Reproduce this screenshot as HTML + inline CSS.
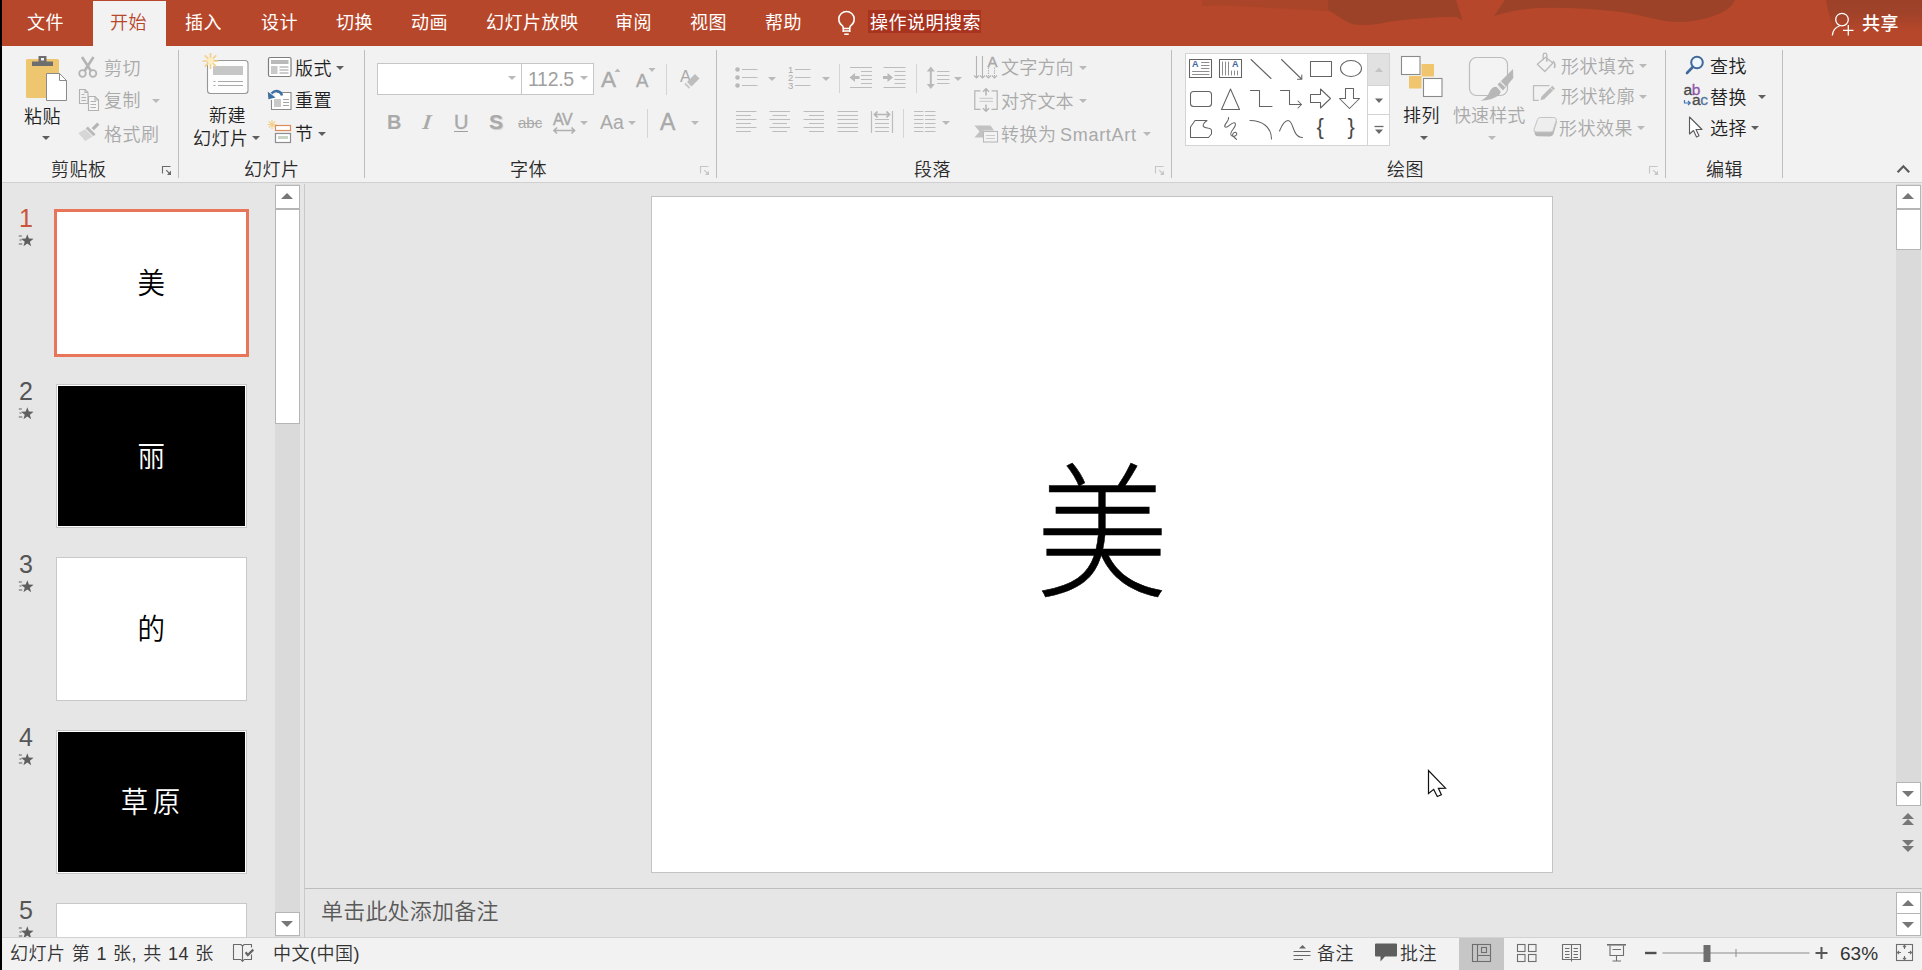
<!DOCTYPE html>
<html lang="zh-CN">
<head>
<meta charset="utf-8">
<title>PowerPoint</title>
<style>
*{box-sizing:border-box;margin:0;padding:0}
html,body{width:1922px;height:970px;overflow:hidden;background:#e6e6e6}
body{font:350 18px/24px "Liberation Sans","Noto Sans CJK SC",sans-serif;color:#1f1f1f;position:relative;letter-spacing:.5px}
.a{position:absolute;white-space:nowrap}
.t{position:absolute;white-space:nowrap;height:24px;line-height:24px}
.d{color:#a9a9a9}
.w{color:#fff;font-weight:400}
.ts{-webkit-text-stroke:.4px #a9a9a9}
svg{position:absolute;overflow:visible}
.sep{position:absolute;width:1px;background:#bebebe}
.ar{position:absolute;width:0;height:0;border-left:4px solid transparent;border-right:4px solid transparent;border-top:4px solid #5e5e5e}
.ar.d{border-top-color:#b9b9b9}
.gl{position:absolute;white-space:nowrap;height:24px;line-height:24px;color:#2a2a2a;top:158px}
#tabbar{position:absolute;left:0;top:0;width:1922px;height:46px;background:#b7472a}
#ribbon{position:absolute;left:0;top:46px;width:1922px;height:137px;background:#f2f2f2;border-bottom:1px solid #d0d0d0}
#leftedge{position:absolute;left:0;top:0;width:2px;height:970px;background:#000;z-index:50}
#status{position:absolute;left:0;top:937px;width:1922px;height:33px;background:#f2f2f2;border-top:1px solid #d2d2d2}
.sb{position:absolute;background:#fff;border:1px solid #b5b5b5}
.trk{position:absolute;background:#dadada}
.tri-u{position:absolute;width:0;height:0;border-left:6px solid transparent;border-right:6px solid transparent;border-bottom:6px solid #777}
.tri-d{position:absolute;width:0;height:0;border-left:6px solid transparent;border-right:6px solid transparent;border-top:6px solid #777}
.th{position:absolute;width:191px;height:144px;border:1px solid #c8c8c8;background:#fff}
.th.k{background:#000;box-shadow:inset 0 0 0 1px #fff}
.tht{position:absolute;left:0;width:100%;text-align:center;font-size:27.5px;line-height:36px;height:36px;transform:scaleY(1.06)}
.num{position:absolute;font-size:25px;line-height:28px;height:28px;color:#555;left:19px;width:14px;text-align:center;letter-spacing:0}
</style>
</head>
<body>
<div id="leftedge"></div>
<!-- ================= TAB BAR ================= -->
<div id="tabbar">
<svg style="left:1180px;top:0" width="742" height="46" viewBox="1180 0 742 46">
<path d="M1202 0L1202 6C1230 4 1260 8 1290 9C1310 10 1325 11 1338 12L1338 0Z" fill="#ab452a"/>
<path d="M1328 0L1328 10C1336 14 1344 22 1354 24.500C1362 25 1370 25 1378 24C1392 21 1405 19.500 1417 18.800C1432 17.500 1445 17 1456 16.800L1462.700 20.800L1456 0Z" fill="#9b4229"/>
<path d="M1505 0L1494 16C1508 12 1522 9 1537 8C1565 7 1592 9 1618 11.500C1635 14 1650 18 1664 20.700C1672 22 1680 22.200 1687 21.800C1702 20 1715 16 1724 11.500C1730 8 1733 4 1735 0Z" fill="#9b4229"/>
<defs><linearGradient id="pg" x1="0" y1="0" x2="0" y2="1"><stop offset="0" stop-color="#9d4229"/><stop offset=".4" stop-color="#9f4229"/><stop offset="1" stop-color="#b7472a"/></linearGradient></defs><path d="M1826 0C1827 8 1830 18 1834 32L1922 32L1922 0Z" fill="url(#pg)"/>
</svg>
<div class="a" style="left:93px;top:1px;width:73px;height:45px;background:#f2f2f2"></div>
<div class="t w" style="left:27px;top:11px">文件</div>
<div class="t" style="left:110px;top:11px;color:#b7472a">开始</div>
<div class="t w" style="left:185px;top:11px">插入</div>
<div class="t w" style="left:261px;top:11px">设计</div>
<div class="t w" style="left:336px;top:11px">切换</div>
<div class="t w" style="left:411px;top:11px">动画</div>
<div class="t w" style="left:486px;top:11px">幻灯片放映</div>
<div class="t w" style="left:615px;top:11px">审阅</div>
<div class="t w" style="left:690px;top:11px">视图</div>
<div class="t w" style="left:765px;top:11px">帮助</div>
<svg style="left:0;top:0" width="900" height="46" viewBox="0 0 900 46" fill="none" stroke="#fff"><path d="M843.100 27.400C843.100 25.600 841.600 25.100 840.400 23.900A7.700 7.700 0 1 1 852.600 23.900C851.400 25.100 849.900 25.600 849.900 27.400" stroke-width="1.600"/><path d="M842.600 28.500h7.800M842.600 31h7.800" stroke-width="1.700"/><path d="M843.300 27v5M849.700 27v5" stroke-width="1.400"/><path d="M844.300 34.200h4.400" stroke-width="1.600"/></svg>
<div class="a" style="left:868px;top:10px;width:113px;height:23px;background:#a8331f"></div>
<div class="t w" style="left:870px;top:11px">操作说明搜索</div>
<svg style="left:1780px;top:0" width="142" height="46" viewBox="1780 0 142 46" fill="none" stroke="#fff" stroke-width="1.300"><circle cx="1842" cy="19.600" r="6.300"/><path d="M1832.300 35.500C1832.800 30.500 1835.500 27.200 1839.500 26"/><path d="M1848.300 25v10.500M1843 30.300h10.500"/></svg>
<div class="t w" style="left:1862px;top:12px;font-weight:500">共享</div>
</div>
<!-- ================= RIBBON ================= -->
<div id="ribbon"></div>
<!-- group separators -->
<div class="sep" style="left:178px;top:50px;height:128px"></div>
<div class="sep" style="left:364px;top:50px;height:128px"></div>
<div class="sep" style="left:716px;top:50px;height:128px"></div>
<div class="sep" style="left:1171px;top:50px;height:128px"></div>
<div class="sep" style="left:1665px;top:50px;height:128px"></div>
<div class="sep" style="left:1782px;top:50px;height:128px"></div>
<!-- group labels -->
<div class="gl" style="left:51px">剪贴板</div>
<div class="gl" style="left:244px">幻灯片</div>
<div class="gl" style="left:510px">字体</div>
<div class="gl" style="left:914px">段落</div>
<div class="gl" style="left:1387px">绘图</div>
<div class="gl" style="left:1706px">编辑</div>

<!-- ---- clipboard ---- -->
<div class="t" style="left:24px;top:105px">粘贴</div>
<div class="ar" style="left:42px;top:136px"></div>
<div class="t d" style="left:104px;top:57px">剪切</div>
<div class="t d" style="left:104px;top:89px">复制</div>
<div class="ar d" style="left:152px;top:99px"></div>
<div class="t d" style="left:104px;top:123px">格式刷</div>

<!-- ---- slides ---- -->
<div class="t" style="left:209px;top:104px">新建</div>
<div class="t" style="left:193px;top:127px">幻灯片</div>
<div class="ar" style="left:252px;top:136px"></div>
<div class="t" style="left:295px;top:57px">版式</div>
<div class="ar" style="left:336px;top:66px"></div>
<div class="t" style="left:295px;top:89px">重置</div>
<div class="t" style="left:295px;top:122px">节</div>
<div class="ar" style="left:318px;top:132px"></div>

<!-- ---- font ---- -->
<div class="a" style="left:377px;top:63px;width:145px;height:32px;background:#fff;border:1px solid #c6c6c6"></div>
<div class="a" style="left:521px;top:63px;width:73px;height:32px;background:#fff;border:1px solid #c6c6c6"></div>
<div class="ar d" style="left:508px;top:76px"></div>
<div class="ar d" style="left:580px;top:76px"></div>
<div class="t" style="left:528px;top:67px;color:#9f9f9f;font-size:19.5px;letter-spacing:-.3px">112.5</div>
<div class="sep" style="left:666px;top:64px;height:31px;background:#d4d4d4"></div>
<div class="sep" style="left:647px;top:109px;height:29px;background:#d4d4d4"></div>
<div class="t d" style="left:387px;top:110px;font-size:20px;font-weight:bold">B</div>
<div class="t d" style="left:423px;top:110px;font-size:21px;font-style:italic;font-weight:bold;font-family:'Liberation Serif',serif;transform:skewX(-8deg)">I</div>
<div class="t d ts" style="left:454px;top:110px;font-size:20px">U</div>
<div class="a" style="left:454px;top:131px;width:14px;height:1px;background:#9f9f9f"></div>
<div class="t d" style="left:489px;top:110px;font-size:21px;font-weight:bold;text-shadow:1px 1px 1px #ccc">S</div>
<div class="t d" style="left:518px;top:111px;font-size:15px;letter-spacing:0;text-decoration:line-through">abc</div>
<div class="t d ts" style="left:553px;top:108px;font-size:16px;letter-spacing:-.6px">AV</div>
<div class="ar d" style="left:580px;top:121px"></div>
<div class="t d" style="left:600px;top:110px;font-size:19.5px;letter-spacing:0">Aa</div>
<div class="ar d" style="left:628px;top:121px"></div>
<div class="t d ts" style="left:660px;top:110px;font-size:23px">A</div>
<div class="ar d" style="left:691px;top:121px"></div>
<div class="t d ts" style="left:601px;top:68px;font-size:22.5px">A</div>
<div class="t d ts" style="left:636px;top:69px;font-size:18.5px">A</div>
<div class="t d" style="left:680px;top:64px;font-size:16.5px">A</div>

<!-- ---- paragraph ---- -->
<div class="ar d" style="left:768px;top:77px"></div>
<div class="ar d" style="left:822px;top:77px"></div>
<div class="ar d" style="left:954px;top:77px"></div>
<div class="ar d" style="left:942px;top:121px"></div>
<div class="sep" style="left:839px;top:64px;height:29px;background:#d4d4d4"></div>
<div class="sep" style="left:916px;top:64px;height:29px;background:#d4d4d4"></div>
<div class="sep" style="left:903px;top:109px;height:29px;background:#d4d4d4"></div>
<div class="t d" style="left:1001px;top:56px;letter-spacing:.2px">文字方向</div>
<div class="ar d" style="left:1079px;top:66px"></div>
<div class="t d" style="left:1001px;top:90px;letter-spacing:.2px">对齐文本</div>
<div class="ar d" style="left:1079px;top:99px"></div>
<div class="t d" style="left:1001px;top:123px;word-spacing:-2px">转换为 <span style="letter-spacing:.7px">SmartArt</span></div>
<div class="ar d" style="left:1143px;top:132px"></div>
<div class="t d ts" style="left:987.500px;top:49.500px;font-size:15px">A</div>

<!-- ---- drawing ---- -->
<div class="a" style="left:1185px;top:53px;width:205px;height:93px;background:#fff;border:1px solid #d4d4d4"></div>
<div class="a" style="left:1367px;top:53px;width:23px;height:33px;background:#e1e1e1;border:1px solid #d4d4d4"></div>
<div class="a" style="left:1367px;top:85px;width:23px;height:30px;background:#fff;border:1px solid #d4d4d4"></div>
<div class="a" style="left:1367px;top:114px;width:23px;height:32px;background:#fff;border:1px solid #d4d4d4"></div>
<div class="t" style="left:1403px;top:104px">排列</div>
<div class="ar" style="left:1420px;top:136px"></div>
<div class="t d" style="left:1453px;top:104px;letter-spacing:.1px">快速样式</div>
<div class="ar d" style="left:1488px;top:136px"></div>
<div class="t d" style="left:1561px;top:55px">形状填充</div>
<div class="ar d" style="left:1639px;top:64px"></div>
<div class="t d" style="left:1561px;top:85px">形状轮廓</div>
<div class="ar d" style="left:1639px;top:95px"></div>
<div class="t d" style="left:1559px;top:117px">形状效果</div>
<div class="ar d" style="left:1637px;top:126px"></div>

<!-- ---- editing ---- -->
<div class="t" style="left:1710px;top:55px">查找</div>
<div class="t" style="left:1710px;top:86px">替换</div>
<div class="ar" style="left:1758px;top:95px"></div>
<div class="t" style="left:1710px;top:117px">选择</div>
<div class="ar" style="left:1751px;top:126px"></div>
<div class="t" style="left:1683.500px;top:82px;font-size:15.500px;line-height:16px;height:16px;color:#4a4a4a;letter-spacing:-.3px;-webkit-text-stroke:.3px #4a4a4a">a<span style="color:#9154a8;-webkit-text-stroke:.3px #9154a8">b</span></div>
<div class="t" style="left:1692px;top:92px;font-size:15.500px;line-height:16px;height:16px;color:#4a4a4a;letter-spacing:-.3px;-webkit-text-stroke:.3px #4a4a4a">a<span style="color:#54779f;-webkit-text-stroke:.3px #54779f">c</span></div>
<div class="t d" style="left:788px;top:65px;font-size:9.500px;line-height:10px;height:10px">1</div>
<div class="t d" style="left:788px;top:73px;font-size:9.500px;line-height:10px;height:10px">2</div>
<div class="t d" style="left:788px;top:81px;font-size:9.500px;line-height:10px;height:10px">3</div>
<!-- ================= RIBBON ICONS (page coordinates) ================= -->
<svg style="left:0;top:0" width="1922" height="190" viewBox="0 0 1922 190" fill="none">
<!-- paste -->
<g id="i-paste">
<rect x="26" y="59" width="33" height="39" rx="1.5" fill="#eec670"/>
<path d="M32 66V61.500h6.500V56h8v5.500H53V66z" fill="#6e6e6e"/>
<rect x="41" y="58" width="3" height="2.500" fill="#f1f1f1"/>
<path d="M46.500 73.500h13l7 7v20h-20z" fill="#fff" stroke="#8a8a8a" stroke-width="1"/>
<path d="M59.500 73.500v7h7" stroke="#8a8a8a" stroke-width="1"/>
</g>
<!-- cut (disabled) -->
<g id="i-cut" stroke="#b4b4b4" stroke-width="1.800">
<circle cx="82.500" cy="73.500" r="3.300"/><circle cx="93" cy="73.500" r="3.300"/>
<path d="M84.500 71L93.500 57M91 71L82 57" stroke-width="2.600"/>
</g>
<!-- copy (disabled) -->
<g id="i-copy" stroke="#b2b2b2" stroke-width="1.100">
<path d="M79.500 89.500h5.500l3 3v11h-8.500z" fill="#f2f2f2"/>
<path d="M85 89.500v3h3" fill="none"/>
<path d="M88.500 96.500h6.500l3.500 3.500v10.500h-10z" fill="#f6f6f6"/>
<path d="M95 96.500v3.500h3.500" fill="none"/>
<path d="M81.500 94.500h3M81.500 97.500h4.500M81.500 100.500h4.500M90.500 101.500h5.500M90.500 104.500h5.500M90.500 107.500h5.500" stroke-width="1"/>
</g>
<!-- format painter (disabled) -->
<g id="i-fp">
<path d="M85.200 129.300L78.300 133L85.200 141L92.500 136.600Z" fill="#d6d6d6"/>
<path d="M86.800 127.500L94.500 135.200" stroke="#b9b9b9" stroke-width="3"/>
<path d="M92.800 129.200L98.300 123.700" stroke="#b4b4b4" stroke-width="3.200"/>
</g>
<!-- new slide -->
<g id="i-new">
<rect x="207.500" y="60.500" width="40.500" height="33" rx="3" fill="#fdfdfd" stroke="#979797" stroke-width="1.100"/>
<rect x="213" y="66" width="30" height="9" fill="#c6c6c6"/>
<path d="M213.500 81.500h2M218 81.500h25M213.500 85.500h2M218 85.500h25" stroke="#a9a9a9" stroke-width="1"/>
<g stroke="#f4d08c" stroke-width="1.700"><path d="M210.500 53v16M202.500 61h16M204.800 55.300l11.400 11.400M216.200 55.300l-11.400 11.400"/></g>
<circle cx="210.500" cy="61" r="3.200" fill="#fdeec0"/>
</g>
<!-- layout -->
<g id="i-layout">
<rect x="268.500" y="57.500" width="22.500" height="19" rx="1.500" fill="#fff" stroke="#7e7e7e" stroke-width="1.200"/>
<rect x="271" y="60" width="17.500" height="4" fill="#b9b9b9"/>
<rect x="271" y="66" width="6.500" height="8" fill="#c9c9c9"/>
<path d="M279.500 67h9M279.500 70h9M279.500 73h9" stroke="#9a9a9a" stroke-width="1"/>
</g>
<!-- reset -->
<g id="i-reset">
<path d="M277 92.500H291V109.500H271.500V100" fill="#fff" stroke="#8a8a8a" stroke-width="1.100"/>
<rect x="274" y="99" width="7" height="8" fill="#c9c9c9"/>
<path d="M283 99.500h6M283 102.500h6M283 105.500h6" stroke="#a4a4a4" stroke-width="1"/>
<path d="M282 95.500C281 91 275.500 89.300 271.500 93.500" stroke="#3e6fa3" stroke-width="2.400"/>
<path d="M267.800 91.800L268.400 99.300L275.600 97.600Z" fill="#3e6fa3"/>
</g>
<!-- section -->
<g id="i-section">
<rect x="275.500" y="125.500" width="15" height="5" fill="#fff" stroke="#e0895a" stroke-width="1.200"/>
<rect x="275.500" y="133.500" width="15" height="9" fill="#fff" stroke="#8e8e8e" stroke-width="1.200"/>
<rect x="278" y="136" width="10" height="3" fill="#c9d4c4"/>
<g stroke="#f4d08c" stroke-width="1.200"><path d="M272 120v9M267.500 124.500h9M268.800 121.300l6.400 6.400M275.200 121.300l-6.400 6.400"/></g>
</g>
<!-- grow / shrink font carets -->
<path d="M614.500 72l3-3.500 3 3.500z" fill="#b9b9b9"/>
<path d="M648.500 68h7l-3.500 4z" fill="#b9b9b9"/>
<!-- clear formatting eraser -->
<g id="i-clear"><path d="M687 82l8-8 4.500 4.500-8 8z" fill="#bdbdbd"/><path d="M685 83.500l4.500 4.500" stroke="#c9c9c9" stroke-width="2"/></g>
<!-- AV arrows -->
<path d="M554 130.500h20.500M557 127.500l-3 3 3 3M571.500 127.500l3 3-3 3" stroke="#b0b0b0" stroke-width="1.700"/>

<!-- paragraph icons -->
<g stroke="#bdbdbd" stroke-width="1.200">
<!-- bullets -->
<path d="M742 69.500h15.500M742 77.500h15.500M742 85.500h15.500"/>
<!-- numbering -->
<path d="M795 69.500h15.500M795 77.500h15.500M795 85.500h15.500"/>
<!-- decrease indent -->
<path d="M850 67.500h22M861 71.500h11M861 75.500h11M861 79.500h11M861 83.500h11M850 87.500h22"/>
<!-- increase indent -->
<path d="M883.500 67.500h22M894.500 71.500h11M894.500 75.500h11M894.500 79.500h11M894.500 83.500h11M883.500 87.500h22"/>
<!-- line spacing -->
<path d="M937 71.500h12.500M937 75.500h12.500M937 79.500h12.500M937 83.500h12.500"/>
<!-- align left -->
<path d="M736 111.500h20.500M736 115.500h15M736 119.500h20.500M736 123.500h15M736 127.500h20.500M736 131.500h15"/>
<!-- center -->
<path d="M769.500 111.500h20.500M772.500 115.500h14.500M769.500 119.500h20.500M772.500 123.500h14.500M769.500 127.500h20.500M772.500 131.500h14.500"/>
<!-- right -->
<path d="M803.500 111.500h20.500M809 115.500h15M803.500 119.500h20.500M809 123.500h15M803.500 127.500h20.500M809 131.500h15"/>
<!-- justify -->
<path d="M837.500 111.500h20.500M837.500 115.500h20.500M837.500 119.500h20.500M837.500 123.500h20.500M837.500 127.500h20.500M837.500 131.500h20.500"/>
<!-- distribute -->
<path d="M871.500 111v22M892.500 111v22M875 119.500h14M875 123.500h14M875 127.500h14M875 131.500h14"/>
<path d="M874.500 114.500h15M877.500 111.500l-3 3 3 3M886.500 111.500l3 3-3 3" stroke-width="1.700" stroke="#b4b4b4"/>
<!-- columns -->
<path d="M914 111.500h9.500M914 115.500h9.500M914 119.500h9.500M914 123.500h9.500M914 127.500h9.500M914 131.500h9.500M925 111.500h10.500M925 115.500h10.500M925 119.500h10.500M925 123.500h10.500M925 127.500h10.500M925 131.500h10.500"/>
</g>
<g fill="#b9b9b9">
<circle cx="737.500" cy="69.500" r="2.300"/><circle cx="737.500" cy="77.500" r="2.300"/><circle cx="737.500" cy="85.500" r="2.300"/>
<!-- indent arrows -->
<path d="M849.500 77.500l5.500-4.500v3h4.500v3H855v3z"/>
<path d="M893 77.500l-5.500-4.500v3h-4.500v3h4.500v3z"/>
<!-- line spacing arrow -->
<path d="M930.800 66.500l4 5h-3v12.500h3l-4 5-4-5h3V71.500h-3z"/>
</g>
<!-- text direction -->
<g stroke="#b4b4b4" stroke-width="1.100">
<path d="M976.500 56v22M982.500 56v22M974 75.500l2.500 2.500 2.500-2.500M980 75.500l2.500 2.500 2.500-2.500"/>
<path d="M988.500 67.500v10.500M994.500 67.500v10.500" stroke-dasharray="1.500 1"/>
<path d="M986 75.500l2.500 2.500 2.500-2.500M992 75.500l2.500 2.500 2.500-2.500"/>
</g>
<!-- align text -->
<g stroke="#b4b4b4" stroke-width="1.200">
<path d="M980.500 90.800h-5.700v18.500h5.700M991.500 90.800h5.700v18.500h-5.700"/>
<path d="M979.500 98.300h13.500M979.500 101.300h13.500" stroke="#cfcfcf"/>
<path d="M986 95.500v-6.500M983 91.700l3-3 3 3M986 104.500v6.500M983 108.300l3 3 3-3" stroke-width="1.500"/>
</g>
<!-- smartart -->
<g>
<path d="M974.500 125.500h16l3.500 5h-10.500v7h-9l5-6z" fill="#c2c2c2"/>
<rect x="983.500" y="131.500" width="14" height="10.500" fill="#f4f4f4" stroke="#b9b9b9" stroke-width="1.100"/>
<path d="M986 135.500h9M986 138.500h9" stroke="#cacaca" stroke-width="1"/>
</g>
<!-- dialog launchers -->
<g stroke="#6a6a6a" fill="#6a6a6a"><path d="M170.5 166.500H162.5V173.500" fill="none" stroke-width="1.100"/><path d="M166.2 170.200l3.300 3.300" stroke-width="1.100"/><path d="M171.0 170.500V175H167.0Z" stroke="none"/></g>
<g stroke="#c6c6c6" fill="#c6c6c6"><path d="M708.5 166.500H700.5V173.500" fill="none" stroke-width="1.100"/><path d="M704.2 170.200l3.300 3.300" stroke-width="1.100"/><path d="M709.0 170.500V175H705.0Z" stroke="none"/></g>
<g stroke="#c6c6c6" fill="#c6c6c6"><path d="M1163.5 166.500H1155.5V173.500" fill="none" stroke-width="1.100"/><path d="M1159.2 170.200l3.300 3.300" stroke-width="1.100"/><path d="M1164.0 170.500V175H1160.0Z" stroke="none"/></g>
<g stroke="#c6c6c6" fill="#c6c6c6"><path d="M1657.5 166.500H1649.5V173.500" fill="none" stroke-width="1.100"/><path d="M1653.2 170.200l3.300 3.300" stroke-width="1.100"/><path d="M1658.0 170.500V175H1654.0Z" stroke="none"/></g>
<!-- collapse ribbon chevron -->
<path d="M1897.600 172.300L1903.400 166.300L1909.200 172.300" stroke="#5c5c5c" stroke-width="2.200"/>
</svg>
<!-- ================= SHAPES GALLERY + DRAWING/EDITING ICONS ================= -->
<svg style="left:0;top:0" width="1922" height="190" viewBox="0 0 1922 190" fill="none">
<g stroke="#636363" stroke-width="1.050" stroke-linejoin="round" stroke-linecap="round">
<!-- row 1 -->
<rect x="1189.500" y="59.500" width="22" height="18"/>
<path d="M1201.500 62.500h7.500M1201.500 65.500h7.500M1201.500 68.500h7.500M1192.500 71.500h16.500M1192.500 74.500h16.500" stroke="#8e8e8e" stroke-width="1"/>
<rect x="1219.500" y="59.500" width="22" height="18"/>
<path d="M1222.500 62v13M1225.500 62v13M1228.500 62v13M1231.500 71v4M1234.500 71v4M1237.500 71v4" stroke="#8e8e8e" stroke-width="1"/>
<path d="M1251 59.500L1271 78.500"/>
<path d="M1281.500 59.500L1301.500 79M1301.800 75v4.300h-4.300"/>
<rect x="1310.500" y="61.500" width="21" height="15"/>
<ellipse cx="1351" cy="68.500" rx="10.500" ry="8"/>
<!-- row 2 -->
<rect x="1190.500" y="91.500" width="21" height="15" rx="3"/>
<path d="M1230.500 89L1239.500 109.500H1221.500Z"/>
<path d="M1250.500 90.500H1259.500V106.500H1272"/>
<path d="M1280.500 90.500H1289.500V104.500H1301.500M1298 101l3.500 3.500-3.500 3.500"/>
<path d="M1310.500 94.500H1320.500V89L1330.500 98.500 1320.500 108V102.500H1310.500Z"/>
<path d="M1345.500 88.500H1353.500V98.500H1359.500L1349.500 108.500 1339.500 98.500H1345.500Z"/>
<!-- row 3 -->
<path d="M1190.500 127L1195 120.500H1207C1203.500 123 1202 125.500 1204 127 1206 128.500 1211.500 127.500 1211.500 130.500V134L1208.500 137.500H1190.500Z"/>
<path d="M1228.500 117.500C1229.500 121.500 1223 124.500 1225 127 1227.500 129.500 1232 120.500 1235 123 1238 126 1229 131.500 1231 135 1233 138 1238 135.500 1236.500 133 1235 131 1231.500 133.500 1233 136 1234 137.500 1236 138.500 1236.500 139.500"/>
<path d="M1250 120.500C1262 120.500 1271.500 127 1271.500 139"/>
<path d="M1279.500 131C1282 125 1284.500 120.500 1288 120.500 1294 120.500 1292 137.500 1302.500 137.500"/>
</g>
<!-- scroll buttons glyphs -->
<path d="M1375 72l4-4.500 4 4.500z" fill="#c3c3c3"/>
<path d="M1375 98.500h8l-4 4.500z" fill="#6a6a6a"/>
<path d="M1374.500 126.500h9" stroke="#6a6a6a" stroke-width="1.300"/>
<path d="M1375 129.500h8l-4 4.500z" fill="#6a6a6a"/>

<!-- arrange -->
<rect x="1421.500" y="64" width="12.500" height="12.500" fill="#f1c46e"/>
<rect x="1409" y="76" width="12.500" height="12.500" fill="#f1c46e"/>
<rect x="1401.500" y="56.500" width="18.500" height="18" fill="#fff" stroke="#8a8a8a" stroke-width="1.100"/>
<rect x="1423.500" y="78.500" width="18.500" height="18" fill="#fff" stroke="#8a8a8a" stroke-width="1.100"/>

<!-- quick styles (disabled) -->
<rect x="1469.500" y="57.500" width="38" height="38" rx="7" fill="#f3f3f3" stroke="#bdbdbd" stroke-width="1.200"/>
<path d="M1480.500 100.800C1487 100.300 1495 99 1499.500 94.500C1502 91.500 1500.500 87.500 1497 86.800C1492.500 86 1490.500 89.500 1489 93C1487.500 96.500 1484.500 99 1480.500 100.800Z" fill="#b7b7b7"/>
<path d="M1497.500 84.500L1503 90.500L1513.300 78L1513 69Z" fill="#b7b7b7"/>
<path d="M1496.800 86.300l5 5.200" stroke="#f1f1f1" stroke-width="1.200"/>
<path d="M1500.300 81.500l5 5.200" stroke="#f1f1f1" stroke-width="1.200"/>

<!-- shape fill (disabled) -->
<g stroke="#b9b9b9" stroke-width="1.300" stroke-linejoin="round" fill="none">
<path d="M1545.600 57.300L1552.900 63L1544.800 71.500L1537.300 64.200Z"/>
<path d="M1543.200 59.500V55C1543.200 52.600 1546.800 52.600 1546.800 55V60.500"/>
<path d="M1553 61C1555 63 1555.300 65.500 1554.300 68" stroke-width="1.700"/>
</g>
<circle cx="1546.800" cy="60.800" r="1" fill="#b9b9b9"/>
<!-- shape outline (disabled) -->
<path d="M1549.500 85.700H1533.500V100.400H1538.700" stroke="#bdbdbd" stroke-width="1.300" fill="none"/>
<path d="M1540.500 100.200L1541.500 96.600L1552.300 85.800L1555 88.500L1544.200 99.200Z" fill="#bcbcbc"/>
<path d="M1550.300 87.500l2.800 2.800" stroke="#f2f2f2" stroke-width=".8"/>
<!-- shape effects (disabled) -->
<path d="M1534 129.500L1534.800 134C1535 135.300 1536 136 1537.500 136.200L1549.500 136.400C1551.500 136.400 1552.800 135.500 1553.500 134L1556.800 122.500L1556.500 120L1553 130.500Q1552.500 132 1550.500 132H1536Q1534 132 1534 129.500Z" fill="#b7b7b7"/>
<path d="M1540.500 117.500H1553.500Q1556.300 117.500 1556.500 120L1553 130.500Q1552.500 132 1550.500 132H1536Q1533.500 132 1534 129.500L1537.500 119.500Q1538.300 117.500 1540.500 117.500Z" fill="#eeeeee" stroke="#c3c3c3" stroke-width="1"/>

<!-- find -->
<circle cx="1697" cy="62.500" r="5.800" fill="#eef7fd" stroke="#41689b" stroke-width="2"/>
<path d="M1692.800 67l-5.800 6" stroke="#41689b" stroke-width="2.600" stroke-linecap="round"/>
<!-- replace arrow -->
<path d="M1684.500 100v3h5.500M1688 101l2.200 2-2.200 2" stroke="#3f74b5" stroke-width="1.200"/>
<!-- select cursor -->
<path d="M1689.500 117v17l4-3.500 3 6.500 2.500-1.200-3-6.300h6z" fill="#fff" stroke="#5a5a5a" stroke-width="1.100" stroke-linejoin="round"/>
</svg>
<div class="t" style="left:1316.500px;top:115px;font-size:22px;color:#4a4a4a;letter-spacing:0">{</div>
<div class="t" style="left:1347.500px;top:115px;font-size:22px;color:#4a4a4a;letter-spacing:0">}</div>
<div class="t" style="left:1192px;top:58px;font-size:9px;line-height:12px;height:12px;font-weight:bold;color:#41689b">A</div>
<div class="t" style="left:1232px;top:58px;font-size:9px;line-height:12px;height:12px;font-weight:bold;color:#41689b">A</div>
<!-- ================= LEFT THUMBNAIL PANE ================= -->
<div class="num" style="top:204px;color:#c9553a">1</div>
<div class="num" style="top:377px">2</div>
<div class="num" style="top:550px">3</div>
<div class="num" style="top:723px">4</div>
<div class="num" style="top:896px">5</div>
<div class="a" style="left:54px;top:209px;width:195px;height:148px;border:3px solid #e8755a;background:#fff"></div>
<div class="th" style="left:57px;top:212px;border:none;width:189px;height:142px"><div class="tht" style="top:54px;color:#000">美</div></div>
<div class="th k" style="left:56px;top:384px"><div class="tht" style="top:54px;color:#fff">丽</div></div>
<div class="th" style="left:56px;top:557px"><div class="tht" style="top:54px;color:#000">的</div></div>
<div class="th k" style="left:56px;top:730px"><div class="tht" style="top:54px;color:#fff;letter-spacing:4.500px;text-indent:2.500px">草原</div></div>
<div class="th" style="left:56px;top:903px;height:40px"></div>
<svg style="left:0;top:0" width="60" height="940" viewBox="0 0 60 940">
<g transform="translate(0 234.500)"><path d="M27.300 -0.300L28.887 4.116L33.577 4.260L29.868 7.134L31.179 11.640L27.300 9.000L23.421 11.640L24.732 7.134L21.023 4.260L25.713 4.116Z" fill="#5f5f5f"/><path d="M18.800 1.500h3M19.500 5.500h2M18.800 9.500h3.500" stroke="#5f5f5f" stroke-width="1.100"/></g>
<g transform="translate(0 407.500)"><path d="M27.300 -0.300L28.887 4.116L33.577 4.260L29.868 7.134L31.179 11.640L27.300 9.000L23.421 11.640L24.732 7.134L21.023 4.260L25.713 4.116Z" fill="#5f5f5f"/><path d="M18.800 1.500h3M19.500 5.500h2M18.800 9.500h3.500" stroke="#5f5f5f" stroke-width="1.100"/></g>
<g transform="translate(0 580.500)"><path d="M27.300 -0.300L28.887 4.116L33.577 4.260L29.868 7.134L31.179 11.640L27.300 9.000L23.421 11.640L24.732 7.134L21.023 4.260L25.713 4.116Z" fill="#5f5f5f"/><path d="M18.800 1.500h3M19.500 5.500h2M18.800 9.500h3.500" stroke="#5f5f5f" stroke-width="1.100"/></g>
<g transform="translate(0 753.500)"><path d="M27.300 -0.300L28.887 4.116L33.577 4.260L29.868 7.134L31.179 11.640L27.300 9.000L23.421 11.640L24.732 7.134L21.023 4.260L25.713 4.116Z" fill="#5f5f5f"/><path d="M18.800 1.500h3M19.500 5.500h2M18.800 9.500h3.500" stroke="#5f5f5f" stroke-width="1.100"/></g>
<g transform="translate(0 926.500)"><path d="M27.300 -0.300L28.887 4.116L33.577 4.260L29.868 7.134L31.179 11.640L27.300 9.000L23.421 11.640L24.732 7.134L21.023 4.260L25.713 4.116Z" fill="#5f5f5f"/><path d="M18.800 1.500h3M19.500 5.500h2M18.800 9.500h3.500" stroke="#5f5f5f" stroke-width="1.100"/></g>
</svg>
<!-- left scrollbar -->
<div class="trk" style="left:275px;top:184px;width:25px;height:753px"></div>
<div class="sb" style="left:275px;top:185px;width:25px;height:24px"></div>
<div class="tri-u" style="left:281px;top:193px"></div>
<div class="sb" style="left:275px;top:209px;width:25px;height:215px"></div>
<div class="sb" style="left:275px;top:912px;width:25px;height:24px"></div>
<div class="tri-d" style="left:281px;top:921px"></div>
<div class="sep" style="left:304px;top:184px;height:753px;background:#c9c9c9"></div>

<!-- ================= MAIN SLIDE ================= -->
<div class="a" style="left:651px;top:196px;width:902px;height:677px;background:#fff;border:1px solid #c3c3c3"></div>
<div class="a" id="big" style="left:1002.500px;top:440px;width:200px;height:190px;text-align:center;font-size:133px;line-height:190px;color:#000;font-weight:300;-webkit-text-stroke:.5px #000;transform:scaleY(1.1);transform-origin:50% 50%">美</div>
<!-- mouse cursor -->
<svg style="left:0;top:760px" width="1922" height="50" viewBox="0 760 1922 50"><path d="M1428.500 770.500L1428.500 793.500L1433.700 789.400L1437.300 796.500L1441.400 794.800L1438.400 788.300L1445.500 788.100Z" fill="#fff" stroke="#111" stroke-width="1.200" stroke-linejoin="miter"/></svg>
<!-- right scrollbar -->
<div class="trk" style="left:1896px;top:184px;width:25px;height:622px"></div>
<div class="sb" style="left:1896px;top:185px;width:25px;height:24px"></div>
<div class="tri-u" style="left:1902px;top:193px"></div>
<div class="sb" style="left:1896px;top:209px;width:25px;height:41px"></div>
<div class="sb" style="left:1896px;top:782px;width:25px;height:24px"></div>
<div class="tri-d" style="left:1902px;top:791px"></div>
<div class="tri-u" style="left:1902px;top:813px"></div>
<div class="tri-u" style="left:1902px;top:819px"></div>
<div class="tri-d" style="left:1902px;top:840px"></div>
<div class="tri-d" style="left:1902px;top:846px"></div>

<!-- ================= NOTES ================= -->
<div class="a" style="left:305px;top:888px;width:1617px;height:1px;background:#bdbdbd"></div>
<div class="t" style="left:321px;top:898px;font-size:22px;line-height:28px;height:28px;color:#595959;letter-spacing:.2px">单击此处添加备注</div>
<div class="sb" style="left:1896px;top:892px;width:25px;height:22px"></div>
<div class="tri-u" style="left:1902px;top:900px"></div>
<div class="sb" style="left:1896px;top:913px;width:25px;height:23px"></div>
<div class="tri-d" style="left:1902px;top:922px"></div>

<!-- ================= STATUS BAR ================= -->
<div id="status"></div>
<div class="t" style="left:10px;top:942px;color:#333;word-spacing:.7px">幻灯片 第 1 张, 共 14 张</div>
<div class="t" style="left:273px;top:942px;color:#333">中文(中国)</div>
<div class="t" style="left:1317px;top:942px;color:#333">备注</div>
<div class="t" style="left:1400px;top:942px;color:#333">批注</div>
<div class="a" style="left:1459px;top:938px;width:45px;height:32px;background:#c6c6c6"></div>
<div class="t" style="left:1840px;top:942px;color:#333;font-size:19px;letter-spacing:0">63%</div>
<svg style="left:0;top:930px" width="1922" height="40" viewBox="0 930 1922 40" fill="none">
<!-- spell check -->
<path d="M242.500 946L240.800 944.500H233.500V959.500H240.800L242.500 961.500L244.200 959.500H251.500V954.500M251.500 947.500V944.500H244.200L242.500 946V961" stroke="#6a6a6a" stroke-width="1.100" stroke-linejoin="round"/>
<path d="M245.600 952.300L247.800 955L253.300 949.600" stroke="#666" stroke-width="2.200"/>
<!-- notes icon -->
<path d="M1299 948.500l3.500-3.500 3.500 3.500z" fill="#666"/>
<path d="M1293.500 951.500h17M1293.500 955.500h17M1293.500 959.500h9.500" stroke="#666" stroke-width="1.100"/>
<!-- comments icon -->
<path d="M1376 943.500h20a1 1 0 0 1 1 1v11a1 1 0 0 1-1 1h-11l-4.500 5v-5h-4.500a1 1 0 0 1-1-1v-11a1 1 0 0 1 1-1z" fill="#5e5e5e"/>
<!-- normal view -->
<g stroke="#6e6e6e" stroke-width="1.100"><rect x="1472.500" y="944.500" width="18" height="17"/><path d="M1477.500 944.500v17M1477.500 955.500h13"/><rect x="1481.500" y="947.500" width="5" height="5"/></g>
<!-- sorter -->
<g stroke="#6e6e6e" stroke-width="1.100"><rect x="1517.500" y="944.500" width="7.500" height="7"/><rect x="1528.500" y="944.500" width="7.500" height="7"/><rect x="1517.500" y="954.500" width="7.500" height="7"/><rect x="1528.500" y="954.500" width="7.500" height="7"/></g>
<!-- reading -->
<g stroke="#6e6e6e" stroke-width="1.100"><path d="M1562.500 944.500h18v15h-18zM1571.500 944.500v17"/><path d="M1565 948.500h4.500M1565 951.500h4.500M1565 954.500h4.500M1565 957.500h4.500M1573.500 948.500h4.500M1573.500 951.500h4.500M1573.500 954.500h4.500M1573.500 957.500h4.500" stroke-width="1"/></g>
<!-- slideshow -->
<g stroke="#6e6e6e" stroke-width="1.100"><path d="M1607 944.800h19" stroke-width="1.600"/><path d="M1610 945.500v10h13.500v-10M1612.500 949.500h8.500M1616.500 955.500v5.500M1612.500 961h8.500"/></g>
<!-- zoom -->
<path d="M1645 953h11.500" stroke="#4f4f4f" stroke-width="2.400"/>
<path d="M1662.500 953h147" stroke="#8a8a8a" stroke-width="1"/>
<path d="M1736 949v8" stroke="#8a8a8a" stroke-width="1"/>
<rect x="1703.500" y="945" width="7" height="17" fill="#6e6e6e"/>
<path d="M1815.500 953h12M1821.500 947v12" stroke="#555" stroke-width="2"/>
<!-- fit -->
<g stroke="#6e6e6e" stroke-width="1.100"><rect x="1896.500" y="944.500" width="16" height="16"/><path d="M1904.500 945v4M1904.500 956v4M1897 952.500h4M1908 952.500h4M1903 947l1.500-1.500 1.500 1.500M1903 958l1.500 1.500 1.500-1.500M1899 951l-1.500 1.500 1.500 1.500M1910 951l1.500 1.500-1.500 1.500"/></g>
</svg>
</body>
</html>
